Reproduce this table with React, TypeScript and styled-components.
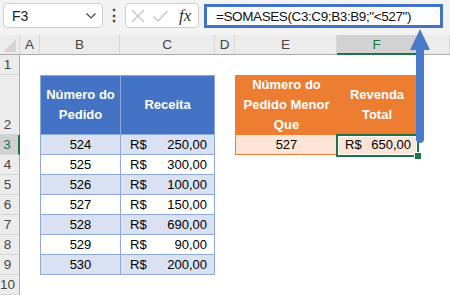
import React from "react";
import styled, { createGlobalStyle } from "styled-components";

const GlobalStyle = createGlobalStyle`
  html, body {
    margin: 0;
    padding: 0;
    background: #ffffff;
  }
  body {
    font-family: "Liberation Sans", Arial, sans-serif;
    color: #000000;
  }
`;

const BLUE = "#4472c4";
const GREEN = "#217346";

const columns = [
  { key: "A", width: 20 },
  { key: "B", width: 80 },
  { key: "C", width: 95 },
  { key: "D", width: 20 },
  { key: "E", width: 102 },
  { key: "F", width: 80 },
  { key: "", width: 0 },
];

const rowHeights = [20, 60, 20, 20, 20, 20, 20, 20, 20, 20];

const orders = [
  { id: 524, value: "250,00" },
  { id: 525, value: "300,00" },
  { id: 526, value: "100,00" },
  { id: 527, value: "150,00" },
  { id: 528, value: "690,00" },
  { id: 529, value: "90,00" },
  { id: 530, value: "200,00" },
];

const activeCol = "F";
const activeRow = 3;

export default function App() {
  const colTemplate =
    "20px " +
    columns.map((c) => (c.width ? `${c.width}px` : "1fr")).join(" ");
  const rowTemplate = "20px " + rowHeights.map((h) => `${h}px`).join(" ");

  return (
    <Page>
      <GlobalStyle />
      <Toolbar>
        <NameBox>
          <span>F3</span>
          <svg width="12" height="8" viewBox="0 0 12 8">
            <path d="M1.5 1.5 L6 6 L10.5 1.5" fill="none" stroke="#444" strokeWidth="1.2" />
          </svg>
        </NameBox>
        <Dots>⋮</Dots>
        <FxBox>
          <svg width="16" height="16" viewBox="0 0 16 16">
            <path d="M2 2 L14 14 M14 2 L2 14" stroke="#c4c4c4" strokeWidth="1.3" />
          </svg>
          <svg width="17" height="16" viewBox="0 0 17 16">
            <path d="M1.5 8.5 L6 13 L15.5 3" fill="none" stroke="#c4c4c4" strokeWidth="1.3" />
          </svg>
          <FxLabel>fx</FxLabel>
        </FxBox>
        <FormulaInput>=SOMASES(C3:C9;B3:B9;"&lt;527")</FormulaInput>
      </Toolbar>

      <Sheet style={{ gridTemplateColumns: colTemplate, gridTemplateRows: rowTemplate }}>
        <Corner>
          <svg width="13" height="13" viewBox="0 0 13 13">
            <path d="M13 0 L13 13 L0 13 Z" fill="#d4d4d4" />
          </svg>
        </Corner>
        {columns.map((c, i) => (
          <ColHeader key={i} style={{ gridColumn: i + 2 }} $active={c.key === activeCol}>
            {c.key}
          </ColHeader>
        ))}
        {rowHeights.map((_, i) => (
          <RowHeader key={i} style={{ gridRow: i + 2 }} $active={i + 1 === activeRow}>
            {i + 1}
          </RowHeader>
        ))}

        <Table $col="3 / 5" $row="3 / 11" $line="#8ea9db" $cols="79px 93px" $rows="58px repeat(7, 19px)">
          <HeadCell $bg={BLUE}>Número do Pedido</HeadCell>
          <HeadCell $bg={BLUE}>Receita</HeadCell>
          {orders.map((o, i) => (
            <React.Fragment key={o.id}>
              <NumCell $bg={i % 2 === 0 ? "#d9e1f2" : "#ffffff"}>{o.id}</NumCell>
              <MoneyCell $bg={i % 2 === 0 ? "#d9e1f2" : "#ffffff"}>
                <span>R$</span>
                <span>{o.value}</span>
              </MoneyCell>
            </React.Fragment>
          ))}
        </Table>

        <Table $col="6 / 8" $row="3 / 5" $line="#ed7d31" $cols="101px 78px" $rows="58px 19px">
          <HeadCell $bg="#ed7d31">Número do Pedido Menor Que</HeadCell>
          <HeadCell $bg="#ed7d31">Revenda Total</HeadCell>
          <NumCell $bg="#fce4d6">527</NumCell>
          <MoneyCell $bg="#fce4d6" $padLeft={7} $padRight={5}>
            <span>R$</span>
            <span>650,00</span>
            <Selection>
              <FillHandle />
            </Selection>
          </MoneyCell>
        </Table>
      </Sheet>

      <Arrow width="24" height="122" viewBox="0 0 24 122">
        <path d="M12 2 L22 23 L2 23 Z" fill="#4a7bca" />
        <rect x="8" y="20" width="8" height="96" rx="4" fill="#4a7bca" />
      </Arrow>
    </Page>
  );
}

const Page = styled.div`
  position: relative;
  width: 450px;
  height: 295px;
  overflow: hidden;
  background: #ffffff;
`;

const Toolbar = styled.div`
  height: 35px;
  box-sizing: border-box;
  display: flex;
  align-items: flex-start;
  padding: 3px 0 0 3px;
  background: #f3f3f3;
`;

const NameBox = styled.div`
  width: 100px;
  height: 25px;
  box-sizing: border-box;
  display: flex;
  align-items: center;
  justify-content: space-between;
  padding: 0 5px 0 8px;
  background: #ffffff;
  border: 1px solid #cfcfcf;
  border-radius: 4px;
  font-size: 14px;
  color: #222;
`;

const Dots = styled.div`
  width: 22px;
  height: 25px;
  display: flex;
  align-items: center;
  justify-content: center;
  font-size: 16px;
  font-weight: bold;
  color: #444;
`;

const FxBox = styled.div`
  width: 74px;
  height: 25px;
  box-sizing: border-box;
  display: flex;
  align-items: center;
  gap: 6px;
  padding: 0 0 0 4px;
  background: #ffffff;
  border: 1px solid #cfcfcf;
  border-radius: 4px;
`;

const FxLabel = styled.span`
  font-family: "Liberation Serif", "Times New Roman", serif;
  font-style: italic;
  font-size: 17px;
  color: #333;
  margin-left: 4px;
`;

const FormulaInput = styled.div`
  margin: 1px 0 0 5px;
  width: 239px;
  height: 24px;
  box-sizing: border-box;
  display: flex;
  align-items: center;
  padding-left: 9px;
  background: #ffffff;
  border: 3px solid ${BLUE};
  font-size: 13.5px;
  letter-spacing: -0.4px;
  color: #111;
  white-space: nowrap;
`;

const Sheet = styled.div`
  display: grid;
  font-size: 13px;
`;

const Corner = styled.div`
  grid-row: 1;
  grid-column: 1;
  background: #ececec;
  border-bottom: 1px solid #ababab;
  border-right: 1px solid #d6d6d6;
  box-sizing: border-box;
  display: flex;
  align-items: flex-end;
  justify-content: flex-end;
  padding: 0 3px 2px 0;
`;

const ColHeader = styled.div<{ $active?: boolean }>`
  grid-row: 1;
  box-sizing: border-box;
  display: flex;
  align-items: center;
  justify-content: center;
  background: ${(p) => (p.$active ? "#d2d2d2" : "#ececec")};
  border-right: 1px solid #d6d6d6;
  border-bottom: ${(p) => (p.$active ? `2px solid ${GREEN}` : "1px solid #ababab")};
  color: ${(p) => (p.$active ? GREEN : "#444")};
  font-size: 13.5px;
`;

const RowHeader = styled.div<{ $active?: boolean }>`
  grid-column: 1;
  box-sizing: border-box;
  display: flex;
  align-items: flex-end;
  justify-content: center;
  padding: 0 4px 2px 0;
  background: ${(p) => (p.$active ? "#d2d2d2" : "#ececec")};
  border-bottom: 1px solid #d6d6d6;
  border-right: ${(p) => (p.$active ? `2px solid ${GREEN}` : "1px solid #ababab")};
  color: ${(p) => (p.$active ? GREEN : "#444")};
  font-size: 13.5px;
`;

const Table = styled.div<{ $col: string; $row: string; $line: string; $cols: string; $rows: string }>`
  grid-column: ${(p) => p.$col};
  grid-row: ${(p) => p.$row};
  display: grid;
  grid-template-columns: ${(p) => p.$cols};
  grid-template-rows: ${(p) => p.$rows};
  gap: 1px;
  padding: 1px;
  background: ${(p) => p.$line};
`;

const HeadCell = styled.div<{ $bg: string }>`
  display: flex;
  align-items: center;
  justify-content: center;
  text-align: center;
  padding: 0 4px;
  background: ${(p) => p.$bg};
  color: #ffffff;
  font-weight: bold;
  font-size: 13px;
  line-height: 20px;
`;

const NumCell = styled.div<{ $bg: string }>`
  display: flex;
  align-items: center;
  justify-content: center;
  background: ${(p) => p.$bg};
  font-size: 13px;
`;

const MoneyCell = styled.div<{ $bg: string; $padLeft?: number; $padRight?: number }>`
  position: relative;
  display: flex;
  align-items: center;
  justify-content: space-between;
  padding: 0 ${(p) => p.$padRight ?? 7}px 0 ${(p) => p.$padLeft ?? 9}px;
  background: ${(p) => p.$bg};
  font-size: 13px;
`;

const Selection = styled.div`
  position: absolute;
  top: -1px;
  left: -2px;
  right: -3px;
  bottom: -3px;
  border: 2px solid ${GREEN};
  box-shadow: inset 0 0 0 1px #ffffff;
  pointer-events: none;
`;

const FillHandle = styled.div`
  position: absolute;
  right: -5px;
  bottom: -5px;
  width: 6px;
  height: 6px;
  background: ${GREEN};
  border: 1px solid #ffffff;
`;

const Arrow = styled.svg`
  position: absolute;
  left: 408px;
  top: 27px;
`;
